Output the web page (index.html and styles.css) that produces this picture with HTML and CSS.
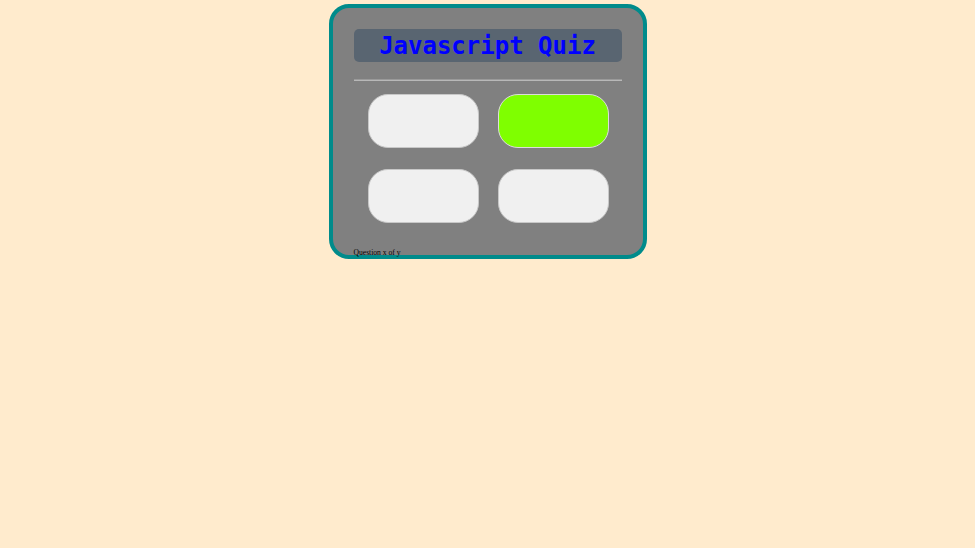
FILE: index.html
```html
<!DOCTYPE html>
<html>
<head>
<meta charset="utf-8">
<link rel="stylesheet" href="styles.css">
</head>
<body>
<div class="quiz">
  <h1 class="title">Javascript Quiz</h1>
  <hr class="rule">
  <div class="answers">
    <button class="answer"></button>
    <button class="answer correct"></button>
    <button class="answer"></button>
    <button class="answer"></button>
  </div>
  <p class="progress">Question x of y</p>
</div>
</body>
</html>
```
FILE: styles.css
```css
html, body {
  margin: 0;
  padding: 0;
  background: #ffebcd;
}
body {
  padding-top: 4px;
}
.quiz {
  box-sizing: border-box;
  width: 318px;
  height: 255px;
  margin: 0 auto;
  border: 4px solid #008b8b;
  border-radius: 20px;
  background: #808080;
  padding: 21px 21px 0 21px;
  display: flex;
  flex-direction: column;
}
.title {
  box-sizing: border-box;
  margin: 0;
  height: 33px;
  padding-top: 1px;
  line-height: 33px;
  background: #596571;
  border-radius: 5px;
  color: #0000ff;
  font-family: "DejaVu Sans Mono", monospace;
  font-size: 24px;
  font-weight: bold;
  text-align: center;
}
.rule {
  margin: 17px 0 0 0;
  border: none;
  border-top: 1px solid #9a9a9a;
  border-bottom: 1px solid #b8b8b8;
  height: 0;
}
.answers {
  margin-top: 13px;
  display: grid;
  grid-template-columns: 111px 111px;
  column-gap: 19px;
  row-gap: 21px;
  justify-content: center;
  padding-left: 1px;
}
.answer {
  box-sizing: border-box;
  height: 54px;
  border: 1px solid #c8c8c8;
  border-radius: 20px;
  background: #f0f0f0;
  padding: 0;
}
.answer.correct {
  background: #7fff00;
  border-color: #dcdcdc;
}
.progress {
  margin: auto 0 0 0;
  font-family: "Liberation Serif", serif;
  font-size: 7.6px;
  line-height: 9px;
  color: #000;
  transform: translateY(2px);
}
```
